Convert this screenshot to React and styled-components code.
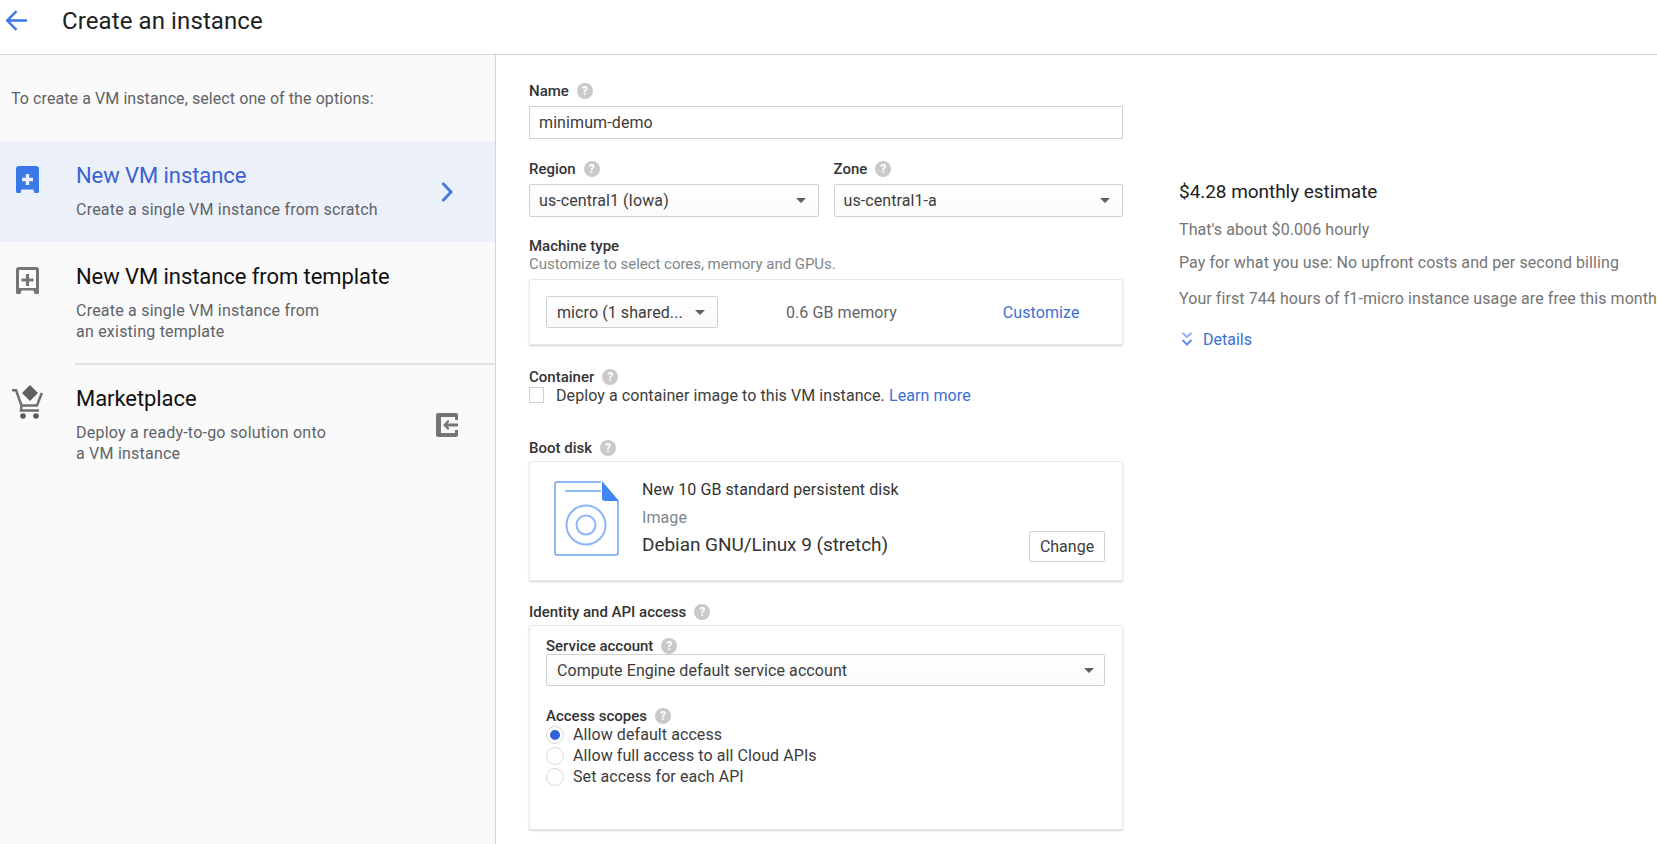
import React from "react";
import styled, { createGlobalStyle } from "styled-components";

const Global = createGlobalStyle`
    html, body { margin: 0; padding: 0; height: 844px; overflow: hidden; background: #fff; }
    body { font-family: Roboto, "Liberation Sans", sans-serif; color: #212121; }
    * { box-sizing: border-box; }
`;

const Page = styled.div`
    width: 1657px;
    height: 844px;
    display: flex;
    flex-direction: column;
    overflow: hidden;
`;

const Header = styled.header`
    height: 55px;
    flex: none;
    display: flex;
    align-items: center;
    padding: 0 0 13px 5px;
    border-bottom: 1px solid #d0d0d0;
`;

const BackLink = styled.span`
    display: flex;
    width: 57px;
`;

const Title = styled.h1`
    margin: 0;
    font-size: 24px;
    line-height: 28px;
    font-weight: 400;
    letter-spacing: 0.1px;
`;

const Body = styled.div`
    flex: 1;
    display: flex;
    min-height: 0;
`;

const Sidebar = styled.aside`
    width: 496px;
    flex: none;
    background: #fafafa;
    border-right: 1px solid #d4d4d4;
    padding-top: 34px;
`;

const Intro = styled.p`
    margin: 0 0 32px 11px;
    font-size: 16px;
    line-height: 20px;
    letter-spacing: 0.08px;
    color: #5f6368;
`;

const Option = styled.div`
    display: flex;
    height: ${(p) => p.$height}px;
    background: ${(p) => (p.$active ? "#ecf0f9" : "transparent")};
`;

const OptionIcon = styled.div`
    width: 76px;
    flex: none;
    display: flex;
    justify-content: center;
    align-items: flex-start;
    padding-right: 22px;
    padding-top: ${(p) => p.$top}px;
    color: ${(p) => (p.$active ? "#3b78e7" : "#757575")};
`;

const OptionText = styled.div`
    flex: 1;
    min-width: 0;
    padding-top: ${(p) => p.$top}px;
`;

const OptionTitle = styled.div`
    font-size: 22px;
    line-height: 28px;
    letter-spacing: -0.07px;
    margin-bottom: 9px;
    color: ${(p) => (p.$active ? "#3b62d0" : "#111")};
`;

const OptionDesc = styled.div`
    font-size: 16px;
    line-height: 21px;
    letter-spacing: 0.22px;
    color: #5f6368;
`;

const OptionAside = styled.div`
    width: 76px;
    flex: none;
    display: flex;
    align-items: center;
    justify-content: center;
    padding-right: 20px;
    color: ${(p) => (p.$active ? "#3b78e7" : "#757575")};
`;

const Divider = styled.div`
    height: 2px;
    margin-left: 75px;
    background: #e2e2e2;
`;

const Main = styled.main`
    width: 594px;
    flex: none;
    margin-left: 33px;
    padding-top: 26px;
`;

const LabelRow = styled.div`
    display: flex;
    align-items: center;
    gap: 8px;
    height: 20px;
    font-size: 15px;
    font-weight: 500;
    color: #333;
    margin-top: ${(p) => p.$top || 0}px;
    margin-bottom: ${(p) => p.$bottom || 0}px;
`;

const HelpDot = styled.span`
    width: 16px;
    height: 16px;
    border-radius: 50%;
    background: #c9c9c9;
    color: #fff;
    font-size: 12px;
    font-weight: 700;
    display: inline-flex;
    align-items: center;
    justify-content: center;
`;

const TextInput = styled.div`
    height: 33px;
    border: 1px solid #d0d0d0;
    padding: 0 9px;
    display: flex;
    align-items: center;
    font-size: 16px;
    letter-spacing: 0.1px;
    color: #3c3c3c;
`;

const Columns = styled.div`
    display: grid;
    grid-template-columns: 1fr 1fr;
    gap: 15px;
    margin-top: 20px;
`;

const Select = styled.div`
    height: ${(p) => p.$height || 33}px;
    width: ${(p) => p.$width || "auto"};
    flex: none;
    border: 1px solid #d0d0d0;
    border-radius: 2px;
    padding: ${(p) => p.$pad || "0 12px 0 9px"};
    display: flex;
    align-items: center;
    justify-content: space-between;
    font-size: 16px;
    letter-spacing: 0.08px;
    color: #3c3c3c;
    background: linear-gradient(#fff, #fafafa);
`;

const Caret = styled.span`
    width: 0;
    height: 0;
    border-left: 5px solid transparent;
    border-right: 5px solid transparent;
    border-top: 5px solid #5f5f5f;
`;

const Hint = styled.div`
    font-size: 15px;
    line-height: 16px;
    letter-spacing: -0.03px;
    color: #80868b;
    margin-bottom: 7px;
`;

const Card = styled.section`
    background: #fff;
    border: 1px solid #e8e8e8;
    border-radius: 2px;
    box-shadow: 0 1px 2px rgba(0, 0, 0, 0.18);
    height: ${(p) => p.$height}px;
    padding: ${(p) => p.$padding};
`;

const MachineRow = styled.div`
    display: flex;
    align-items: center;
    height: 100%;
`;

const Memory = styled.span`
    font-size: 16px;
    letter-spacing: 0.08px;
    color: #5f6368;
    margin-left: 68px;
`;

const Link = styled.a`
    color: #3b6fd8;
    font-size: 16px;
    letter-spacing: 0.08px;
    margin-left: ${(p) => p.$left || 0}px;
`;

const CheckRow = styled.div`
    display: flex;
    align-items: center;
    gap: 12px;
    height: 18px;
    margin-top: -1px;
    font-size: 16px;
    letter-spacing: 0.08px;
    color: #3c3c3c;
`;

const Checkbox = styled.span`
    width: 15px;
    height: 16px;
    border: 1px solid #d0d0d0;
`;

const DiskRow = styled.div`
    display: flex;
    height: 100%;
`;

const DiskArt = styled.div`
    width: 112px;
    padding: 19px 0 0 24px;
    flex: none;
`;

const DiskInfo = styled.div`
    flex: 1;
    padding-top: 18px;
`;

const DiskLine = styled.div`
    font-size: ${(p) => p.$size || 16}px;
    letter-spacing: ${(p) => p.$spacing || 0.08}px;
    color: ${(p) => p.$color || "#333"};
    line-height: 20px;
    margin-bottom: ${(p) => p.$bottom || 0}px;
`;

const ChangeButton = styled.button`
    align-self: flex-end;
    margin: 0 17px 18px 0;
    width: 76px;
    height: 31px;
    background: #fff;
    border: 1px solid #d0d0d0;
    border-radius: 2px;
    font-family: inherit;
    font-size: 16px;
    color: #3c3c3c;
`;

const RadioGroup = styled.div`
    margin-top: -2px;
`;

const RadioRow = styled.div`
    display: flex;
    align-items: center;
    gap: 9px;
    height: 21px;
    font-size: 16px;
    letter-spacing: 0.08px;
    color: #3c3c3c;
`;

const Radio = styled.span`
    width: 18px;
    height: 18px;
    border-radius: 50%;
    border: 1px solid #d8d8d8;
    display: flex;
    align-items: center;
    justify-content: center;
    &::after {
        content: "";
        width: 10px;
        height: 10px;
        border-radius: 50%;
        background: ${(p) => (p.$on ? "#2f62d6" : "transparent")};
    }
`;

const Estimate = styled.aside`
    margin-left: 56px;
    padding-top: 125px;
    width: 490px;
    flex: none;
    white-space: nowrap;
`;

const EstimateTitle = styled.div`
    font-size: 19px;
    line-height: 24px;
    letter-spacing: -0.05px;
    color: #212121;
    margin-bottom: 16px;
`;

const EstimateLine = styled.div`
    font-size: 16px;
    line-height: 20px;
    letter-spacing: 0.08px;
    color: #757575;
    margin-bottom: ${(p) => p.$bottom}px;
`;

const DetailsRow = styled.div`
    display: flex;
    align-items: center;
    gap: 8px;
    height: 20px;
    color: #3b6fd8;
    font-size: 16px;
`;

const Label = ({ children, top, bottom }) => (
    <LabelRow $top={top} $bottom={bottom}>
        {children}
        <HelpDot>?</HelpDot>
    </LabelRow>
);

const BackArrow = () => (
    <svg width="22" height="21" viewBox="0 0 22 21" fill="none" stroke="#3b78e7" strokeWidth="2.400">
        <path d="M22 10.500H2.500M11.500 1.200l-9.300 9.300 9.300 9.300" />
    </svg>
);

const SmallChevron = () => (
    <svg width="12" height="20" viewBox="0 0 12 20" fill="none" stroke="currentColor" strokeWidth="2.800">
        <path d="M1.500 1l8.500 9-8.500 9" />
    </svg>
);

const VmIcon = ({ outline }) => (
    <svg width="23" height="27" viewBox="0 0 23 27">
        <path
            fill="currentColor"
            fillRule="evenodd"
            d={
                outline
                    ? "M3 0h17a3 3 0 0 1 3 3v22.500a1.500 1.500 0 0 1-1.500 1.500h-3l-1-3.500H5.500l-1 3.500h-3A1.500 1.500 0 0 1 0 25.500V3a3 3 0 0 1 3-3zm0 3v18h17V3zM10 7h3v4.500h4.500v3H13V19h-3v-4.500H5.500v-3H10z"
                    : "M3 0h17a3 3 0 0 1 3 3v22.500a1.500 1.500 0 0 1-1.500 1.500h-3l-1-3.500H5.500l-1 3.500h-3A1.500 1.500 0 0 1 0 25.500V3a3 3 0 0 1 3-3zM9.800 8v3.800H6v3.400h3.800V19h3.400v-3.800H17v-3.400h-3.800V8z"
            }
        />
    </svg>
);

const CartIcon = () => (
    <svg width="31" height="34" viewBox="0 0 31 34">
        <path d="M18 0l8 8-8 8-8-8z" fill="#5f5f5f" />
        <path
            d="M0 5.200h4l5.500 15.300H25L29.800 8M9.500 20.500L9 25.500h18"
            fill="none"
            stroke="#6f6f6f"
            strokeWidth="2.500"
        />
        <circle cx="11" cy="31" r="2.800" fill="#5a5a5a" />
        <circle cx="24" cy="31" r="2.800" fill="#5a5a5a" />
    </svg>
);

const ExitIcon = () => (
    <svg width="22" height="24" viewBox="0 0 22 24">
        <path
            fill="currentColor"
            d="M2 0h18a2 2 0 0 1 2 2v5h-3V4H5v16h14v-3h3v5a2 2 0 0 1-2 2H2a2 2 0 0 1-2-2V2a2 2 0 0 1 2-2zM7 12l5-5 1.500 1.500-2 2H22v3H11.500l2 2L12 17z"
        />
    </svg>
);

const DiskIcon = () => (
    <svg width="65" height="75" viewBox="0 0 65 75" fill="none">
        <path
            d="M47 1H3a2 2 0 0 0-2 2v69a2 2 0 0 0 2 2h59a2 2 0 0 0 2-2V20"
            stroke="#6ea3f5"
            strokeWidth="1.500"
        />
        <path d="M11 10h36" stroke="#6ea3f5" strokeWidth="1.500" />
        <path d="M48 0l17 20H51a3 3 0 0 1-3-3z" fill="#4285f4" />
        <circle cx="32" cy="44" r="19.500" stroke="#8db6f7" strokeWidth="2" />
        <circle cx="32" cy="44" r="9.500" stroke="#8db6f7" strokeWidth="2" />
    </svg>
);

const DoubleChevron = () => (
    <svg width="16" height="14" viewBox="0 0 16 14" fill="none">
        <path d="M3.500 1l4.500 4 4.500-4" stroke="#8ab0f5" strokeWidth="2" />
        <path d="M3.500 8l4.500 4.500L12.500 8" stroke="#5f8ff0" strokeWidth="2" />
    </svg>
);

export default function App() {
    return (
        <Page>
            <Global />
            <Header>
                <BackLink>
                    <BackArrow />
                </BackLink>
                <Title>Create an instance</Title>
            </Header>
            <Body>
                <Sidebar>
                    <Intro>To create a VM instance, select one of the options:</Intro>
                    <Option $active $height={101}>
                        <OptionIcon $active $top={25}>
                            <VmIcon />
                        </OptionIcon>
                        <OptionText $top={21}>
                            <OptionTitle $active>New VM instance</OptionTitle>
                            <OptionDesc>Create a single VM instance from scratch</OptionDesc>
                        </OptionText>
                        <OptionAside $active>
                            <SmallChevron />
                        </OptionAside>
                    </Option>
                    <Option $height={121}>
                        <OptionIcon $top={25}>
                            <VmIcon outline />
                        </OptionIcon>
                        <OptionText $top={21}>
                            <OptionTitle>New VM instance from template</OptionTitle>
                            <OptionDesc>
                                Create a single VM instance from
                                <br />
                                an existing template
                            </OptionDesc>
                        </OptionText>
                    </Option>
                    <Divider />
                    <Option $height={120}>
                        <OptionIcon $top={20}>
                            <CartIcon />
                        </OptionIcon>
                        <OptionText $top={20}>
                            <OptionTitle>Marketplace</OptionTitle>
                            <OptionDesc>
                                Deploy a ready-to-go solution onto
                                <br />a VM instance
                            </OptionDesc>
                        </OptionText>
                        <OptionAside>
                            <ExitIcon />
                        </OptionAside>
                    </Option>
                </Sidebar>
                <Main>
                    <Label bottom={5}>Name</Label>
                    <TextInput>minimum-demo</TextInput>
                    <Columns>
                        <div>
                            <Label bottom={5}>Region</Label>
                            <Select>
                                us-central1 (Iowa)
                                <Caret />
                            </Select>
                        </div>
                        <div>
                            <Label bottom={5}>Zone</Label>
                            <Select>
                                us-central1-a
                                <Caret />
                            </Select>
                        </div>
                    </Columns>
                    <LabelRow $top={19}>Machine type</LabelRow>
                    <Hint>Customize to select cores, memory and GPUs.</Hint>
                    <Card $height={66} $padding="0 16px">
                        <MachineRow>
                            <Select $width="172px" $height={32} $pad="0 12px 0 10px">
                                micro (1 shared...
                                <Caret />
                            </Select>
                            <Memory>0.6 GB memory</Memory>
                            <Link $left={106}>Customize</Link>
                        </MachineRow>
                    </Card>
                    <Label top={22}>Container</Label>
                    <CheckRow>
                        <Checkbox />
                        <span>
                            Deploy a container image to this VM instance.{" "}
                            <Link>Learn more</Link>
                        </span>
                    </CheckRow>
                    <Label top={34} bottom={3}>Boot disk</Label>
                    <Card $height={120} $padding="0">
                        <DiskRow>
                            <DiskArt>
                                <DiskIcon />
                            </DiskArt>
                            <DiskInfo>
                                <DiskLine $bottom={8}>New 10 GB standard persistent disk</DiskLine>
                                <DiskLine $color="#80868b" $bottom={7}>Image</DiskLine>
                                <DiskLine $size={19} $spacing={-0.05}>Debian GNU/Linux 9 (stretch)</DiskLine>
                            </DiskInfo>
                            <ChangeButton>Change</ChangeButton>
                        </DiskRow>
                    </Card>
                    <Label top={21} bottom={3}>Identity and API access</Label>
                    <Card $height={205} $padding="10px 17px 0 16px">
                        <Label bottom={-2}>Service account</Label>
                        <Select $height={32} $pad="0 10px 0 10px">
                            Compute Engine default service account
                            <Caret />
                        </Select>
                        <Label top={20}>Access scopes</Label>
                        <RadioGroup>
                            <RadioRow>
                                <Radio $on />
                                Allow default access
                            </RadioRow>
                            <RadioRow>
                                <Radio />
                                Allow full access to all Cloud APIs
                            </RadioRow>
                            <RadioRow>
                                <Radio />
                                Set access for each API
                            </RadioRow>
                        </RadioGroup>
                    </Card>
                </Main>
                <Estimate>
                    <EstimateTitle>$4.28 monthly estimate</EstimateTitle>
                    <EstimateLine $bottom={13}>That's about $0.006 hourly</EstimateLine>
                    <EstimateLine $bottom={16}>Pay for what you use: No upfront costs and per second billing</EstimateLine>
                    <EstimateLine $bottom={20}>Your first 744 hours of f1-micro instance usage are free this month</EstimateLine>
                    <DetailsRow>
                        <DoubleChevron />
                        Details
                    </DetailsRow>
                </Estimate>
            </Body>
        </Page>
    );
}
